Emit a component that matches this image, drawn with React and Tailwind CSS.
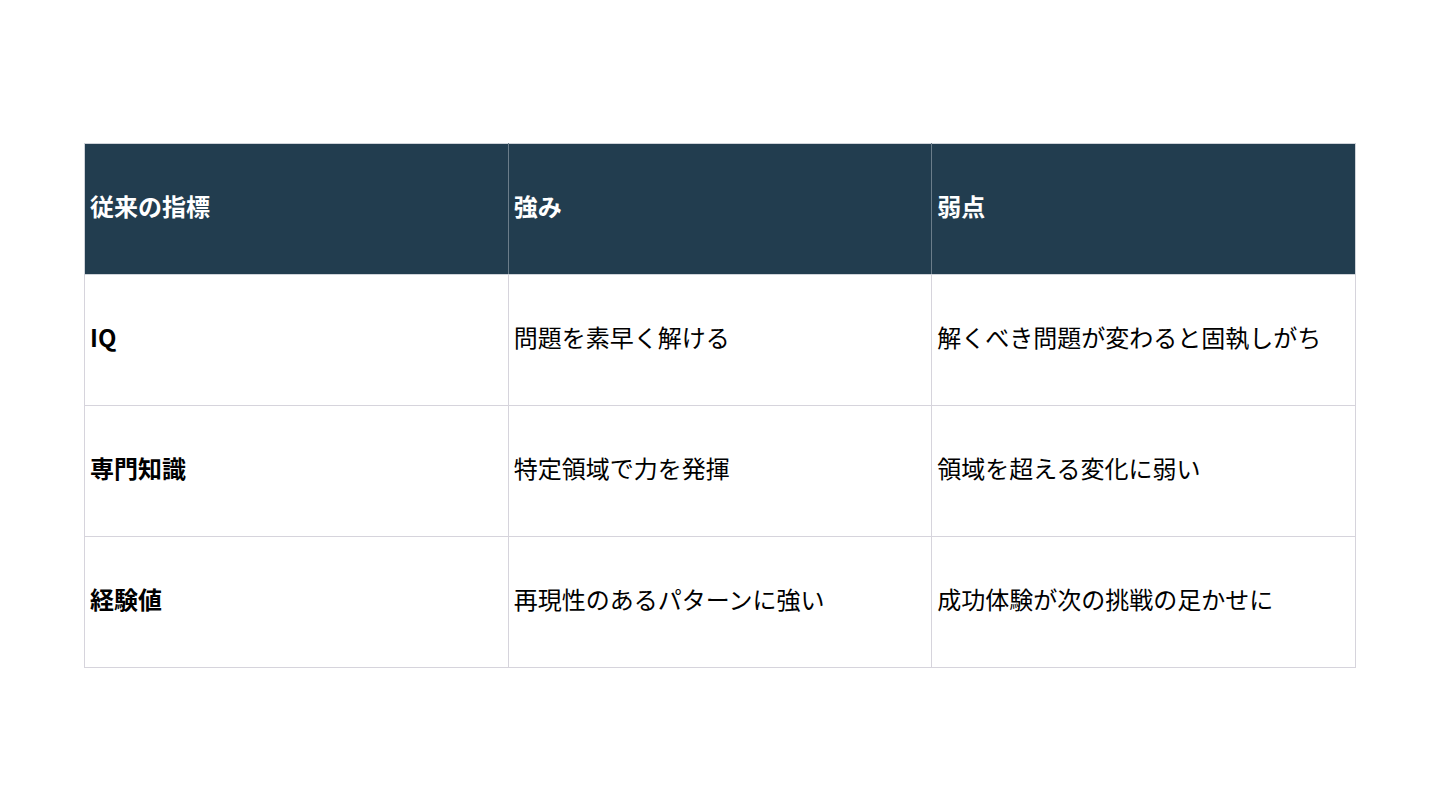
import React from 'react';

const rows = [
  { metric: 'IQ', strength: '問題を素早く解ける', weakness: '解くべき問題が変わると固執しがち' },
  { metric: '専門知識', strength: '特定領域で力を発揮', weakness: '領域を超える変化に弱い' },
  { metric: '経験値', strength: '再現性のあるパターンに強い', weakness: '成功体験が次の挑戦の足かせに' },
];

const font = { fontFamily: '"Noto Sans CJK JP", "Noto Sans", sans-serif' };

export default function App() {
  return (
    <div className="w-[1440px] h-[810px] bg-white flex items-center justify-center" style={font}>
      <table className="w-[1272px] border-collapse table-fixed text-[24px] leading-none">
        <thead>
          <tr className="h-[131px] bg-[#223d4f] text-white">
            <th className="text-left font-bold pl-[5px] pb-[5px] border border-[#cfd3d9] border-r-[#6b7d8a]">従来の指標</th>
            <th className="text-left font-bold pl-[5px] pb-[5px] border border-[#cfd3d9] border-r-[#6b7d8a]">強み</th>
            <th className="text-left font-bold pl-[5px] pb-[5px] border border-[#cfd3d9]">弱点</th>
          </tr>
        </thead>
        <tbody>
          {rows.map((r) => (
            <tr key={r.metric} className="h-[131px] text-black">
              <td className="font-bold pl-[5px] pb-[5px] border border-[#d6d4dc]">{r.metric}</td>
              <td className="pl-[5px] pb-[5px] border border-[#d6d4dc]">{r.strength}</td>
              <td className="pl-[5px] pb-[5px] border border-[#d6d4dc]">{r.weakness}</td>
            </tr>
          ))}
        </tbody>
      </table>
    </div>
  );
}
